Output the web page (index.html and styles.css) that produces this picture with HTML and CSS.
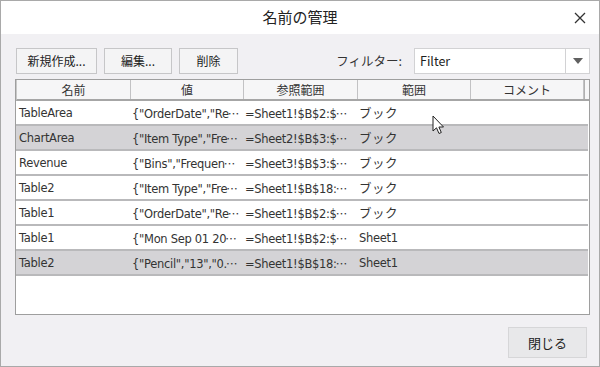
FILE: index.html
```html
<!DOCTYPE html>
<html lang="ja">
<head>
<meta charset="utf-8">
<title>名前の管理</title>
<link rel="stylesheet" href="styles.css">
</head>
<body>
<div class="dialog">
  <div class="titlebar">
    <span></span>
    <span class="title">名前の管理</span>
    <span class="close"><svg width="12" height="12" viewBox="0 0 12 12"><path d="M1 1L11 11M11 1L1 11" stroke="#333" stroke-width="1.3"/></svg></span>
  </div>
  <div class="content">
    <div class="toolbar">
      <button class="btn btn-new">新規作成...</button>
      <button class="btn btn-edit">編集...</button>
      <button class="btn btn-del">削除</button>
      <span class="spacer"></span>
      <span class="filter-label">フィルター:</span>
      <div class="select">
        <span class="select-text">Filter</span>
        <span class="select-arrow"><svg width="10" height="6" viewBox="0 0 10 6"><path d="M0 0H10L5 6Z" fill="#606060"/></svg></span>
      </div>
    </div>
    <div class="table">
      <div class="thead">
        <div class="th">名前</div>
        <div class="th">値</div>
        <div class="th">参照範囲</div>
        <div class="th">範囲</div>
        <div class="th">コメント</div>
        <div class="th th-stub"></div>
      </div>
      <div class="tbody">
        <div class="tr"><div class="td">TableArea</div><div class="td">{"OrderDate","Re<span class="el">…</span></div><div class="td">=Sheet1!$B$2:$<span class="el">…</span></div><div class="td jp">ブック</div><div class="td"></div></div>
        <div class="tr sel"><div class="td">ChartArea</div><div class="td">{"Item Type","Fre<span class="el">…</span></div><div class="td">=Sheet2!$B$3:$<span class="el">…</span></div><div class="td jp">ブック</div><div class="td"></div></div>
        <div class="tr"><div class="td">Revenue</div><div class="td">{"Bins","Frequen<span class="el">…</span></div><div class="td">=Sheet3!$B$3:$<span class="el">…</span></div><div class="td jp">ブック</div><div class="td"></div></div>
        <div class="tr"><div class="td">Table2</div><div class="td">{"Item Type","Fre<span class="el">…</span></div><div class="td">=Sheet1!$B$18:<span class="el">…</span></div><div class="td jp">ブック</div><div class="td"></div></div>
        <div class="tr"><div class="td">Table1</div><div class="td">{"OrderDate","Re<span class="el">…</span></div><div class="td">=Sheet1!$B$2:$<span class="el">…</span></div><div class="td jp">ブック</div><div class="td"></div></div>
        <div class="tr"><div class="td">Table1</div><div class="td">{"Mon Sep 01 20<span class="el">…</span></div><div class="td">=Sheet1!$B$2:$<span class="el">…</span></div><div class="td">Sheet1</div><div class="td"></div></div>
        <div class="tr sel"><div class="td">Table2</div><div class="td">{"Pencil","13","0.<span class="el">…</span></div><div class="td">=Sheet1!$B$18:<span class="el">…</span></div><div class="td">Sheet1</div><div class="td"></div></div>
      </div>
    </div>
  </div>
  <div class="footer">
    <button class="btn btn-close">閉じる</button>
  </div>
  <svg class="cursor" width="14" height="21" viewBox="0 0 14 21"><path d="M1 1V16L4.5 12.8L7 18.5L9.3 17.5L6.9 12H11.5Z" fill="#fff" stroke="#222" stroke-width="1" stroke-linejoin="round"/></svg>
</div>
</body>
</html>
```

FILE: styles.css
```css
* { box-sizing: border-box; }
html, body { margin: 0; padding: 0; }
body {
  width: 600px;
  height: 367px;
  overflow: hidden;
  font-family: "DejaVu Sans", "Noto Sans CJK JP", sans-serif;
  font-size: 12px;
  color: #1e1e1e;
  background: #f1f0f3;
}
.dialog {
  position: relative;
  width: 600px;
  height: 367px;
  border: 1px solid #a9a9a9;
  background: #f1f0f3;
  display: flex;
  flex-direction: column;
}
.titlebar {
  height: 33px;
  background: #fff;
  display: grid;
  grid-template-columns: 1fr auto 1fr;
  align-items: center;
  padding-bottom: 2px;
}
.title {
  font-family: "Noto Sans CJK JP", sans-serif;
  font-size: 15px;
  color: #222;
}
.close {
  justify-self: end;
  margin-right: 13px;
  display: flex;
  padding-top: 3px;
}
.content {
  padding: 13px 9px 0 14px;
  display: flex;
  flex-direction: column;
  gap: 4px;
}
.toolbar {
  display: flex;
  align-items: center;
  height: 27px;
}
.btn {
  font-family: "Noto Sans CJK JP", sans-serif;
  font-size: 12px;
  color: #222;
  background: #f4f4f5;
  border: 1px solid #c6c6c8;
  height: 26px;
  padding: 0;
  margin: 0;
}
.btn-new { width: 81px; margin-left: 1px; }
.btn-edit { width: 68px; margin-left: 7px; }
.btn-del { width: 59px; margin-left: 7px; }
.spacer { flex: 1; }
.filter-label {
  font-family: "Noto Sans CJK JP", sans-serif;
  font-size: 12.5px;
  color: #333;
  margin-right: 12px;
}
.select {
  width: 176px;
  height: 26px;
  background: #fff;
  border: 1px solid #d2d2d4;
  display: flex;
  align-items: center;
}
.select-text {
  flex: 1;
  padding-left: 5px;
  font-family: "Noto Sans CJK JP", sans-serif;
  font-size: 12.5px;
}
.select-arrow {
  width: 24px;
  height: 100%;
  border-left: 1px solid #d2d2d4;
  display: flex;
  align-items: center;
  justify-content: center;
}
.table {
  height: 236px;
  margin-top: 1px;
  border: 1px solid #9e9e9e;
  background: #fff;
  display: flex;
  flex-direction: column;
}
.thead {
  display: grid;
  grid-template-columns: 114px 113px 114px 113px 113px 1fr;
  height: 21px;
  background: #f6f6f7;
  border-bottom: 2px solid #a6a6a6;
  border-left: 1px solid #c8c8c8;
}
.th {
  font-family: "Noto Sans CJK JP", sans-serif;
  font-size: 12px;
  color: #333;
  text-align: center;
  line-height: 19px;
  border-right: 1px solid #c2c2c4;
}
.th-stub { border-right: 1px solid #b0b0b0; margin-right: 4px; }
.tbody {
  display: flex;
  flex-direction: column;
  margin-right: 1px;
}
.tr {
  display: grid;
  grid-template-columns: 114px 113px 114px 113px 1fr;
  height: 25px;
  border-bottom: 2px solid #b9b9bb;
  align-items: center;
}
.tr.sel { background: #d4d3d6; }
.td {
  white-space: nowrap;
  overflow: hidden;
  padding-left: 2px;
  color: #333;
  font-size: 11.5px;
  letter-spacing: -0.3px;
}
.td:first-child { padding-left: 3px; }
.td.jp {
  font-family: "Noto Sans CJK JP", sans-serif;
  font-size: 12.5px;
  letter-spacing: 0.5px;
}
.el {
  font-family: "Noto Sans CJK JP", sans-serif;
  letter-spacing: 0;
  margin-left: -1px;
}
.cursor {
  position: absolute;
  left: 431px;
  top: 114px;
}
.footer {
  display: flex;
  justify-content: flex-end;
  padding: 12px 12px 0 0;
}
.btn-close {
  width: 79px;
  height: 31px;
  font-size: 13px;
  background: #e8e8ea;
  border-color: #d6d6d8;
}
```
